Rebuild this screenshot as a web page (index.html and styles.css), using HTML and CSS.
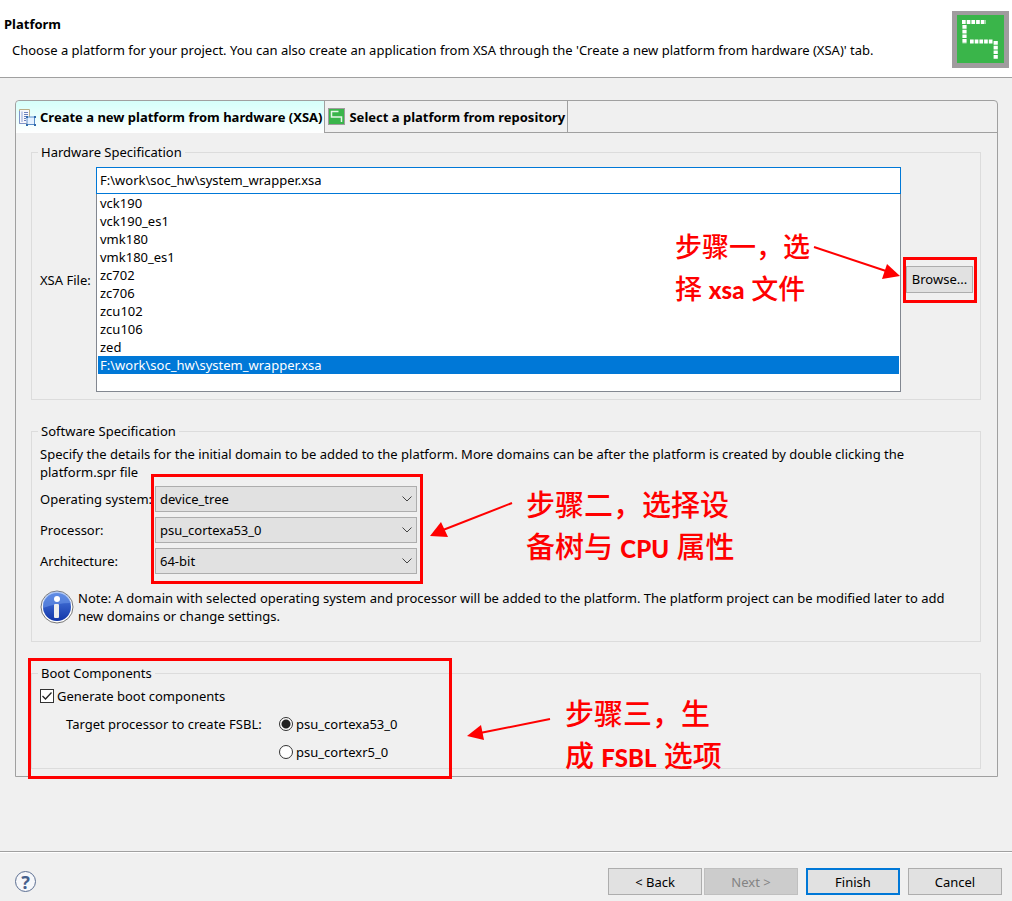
FILE: index.html
```html
<!DOCTYPE html>
<html lang="zh-CN">
<head>
    <meta charset="UTF-8">
    <meta name="viewport" content="width=device-width, initial-scale=1.0">
    <title>Platform</title>
    <link rel="stylesheet" href="styles.css">
</head>
<body>
    <header class="banner">
        <div class="banner-text">
            <h1>Platform</h1>
            <p>Choose a platform for your project. You can also create an application from XSA through the 'Create a new platform from hardware (XSA)' tab.</p>
        </div>
        <svg class="banner-logo" viewBox="0 0 57 57" aria-hidden="true">
            <rect width="57" height="57" fill="#a09c9e"/>
            <rect x="5" y="4" width="47" height="48" fill="#3ab54a"/>
            <g fill="none" stroke="#fff" stroke-width="4.200" stroke-dasharray="3.700 1">
                <path d="M10 11H34"/>
                <path d="M12.500 14V33"/>
                <path d="M18 30.500H41"/>
                <path d="M43.700 30V48.500"/>
            </g>
        </svg>
    </header>

    <main class="content">
        <div class="folder">
            <div class="tabs" role="tablist">
                <button type="button" class="tab active" role="tab" aria-selected="true">
                    <svg class="tab-icon" viewBox="0 0 17 17" aria-hidden="true">
                        <path d="M.5 .5H10.500V14.500H.5Z" fill="#f7f7fb" stroke="#b9ad86"/>
                        <path d="M.5 2V14.500H7" fill="none" stroke="#7f93c8"/>
                        <path d="M3 2.500V13" stroke="#8fa5d6"/>
                        <path d="M5 3.500H9M5 5.500H9M5 7.500H8M5 9.500H7M5 11.500H7" stroke="#6c82bd"/>
                        <path d="M8 8H15.500V15.500H8Z" fill="#e4f1ff" stroke="#5b8fca"/>
                        <path d="M7 7h2v2H7zM15 7h2v2h-2zM7 15h2v2H7zM15 15h2v2h-2z" fill="#2f69ab"/>
                    </svg>
                    Create a new platform from hardware (XSA)
                </button>
                <button type="button" class="tab" role="tab" aria-selected="false">
                    <svg class="tab-icon" viewBox="0 0 17 17" aria-hidden="true">
                        <rect width="17" height="17" fill="#a09c9e"/>
                        <rect x="1" y="1" width="15" height="15" fill="#3ab54a"/>
                        <path d="M10.500 3.500H3.500V9H13.500V14" fill="none" stroke="#e6f6e8" stroke-width="1.500"/>
                    </svg>
                    Select a platform from repository
                </button>
                <div class="tab-rest"></div>
            </div>

            <div class="panel">
                <fieldset class="group hardware">
                    <legend>Hardware Specification</legend>
                    <div class="xsa-row">
                        <label for="xsaFile">XSA File:</label>
                        <div class="xsa-picker">
                            <input type="text" id="xsaFile" class="xsa-input" value="F:\work\soc_hw\system_wrapper.xsa">
                            <select class="xsa-list" size="11" aria-label="XSA File">
                                <option>vck190</option>
                                <option>vck190_es1</option>
                                <option>vmk180</option>
                                <option>vmk180_es1</option>
                                <option>zc702</option>
                                <option>zc706</option>
                                <option>zcu102</option>
                                <option>zcu106</option>
                                <option>zed</option>
                                <option selected>F:\work\soc_hw\system_wrapper.xsa</option>
                            </select>
                            <div class="note note-one">
                                <p>步骤一，选<br>择 <b>xsa</b> 文件</p>
                                <svg class="arrow" width="88" height="36" viewBox="0 0 88 36" aria-hidden="true">
                                    <path d="M1 2L76 27" stroke="#f00" stroke-width="2"/>
                                    <path d="M87 31L69 34L74 19Z" fill="#f00"/>
                                </svg>
                            </div>
                        </div>
                        <div class="browse-frame">
                            <button type="button" class="btn">Browse...</button>
                        </div>
                    </div>
                </fieldset>

                <fieldset class="group software">
                    <legend>Software Specification</legend>
                    <p>Specify the details for the initial domain to be added to the platform. More domains can be after the platform is created by double clicking the platform.spr file</p>
                    <div class="domain">
                        <div class="domain-labels">
                            <label for="os">Operating system:</label>
                            <label for="processor">Processor:</label>
                            <label for="arch">Architecture:</label>
                        </div>
                        <div class="domain-fields">
                            <select id="os" class="combo"><option>device_tree</option></select>
                            <select id="processor" class="combo"><option>psu_cortexa53_0</option></select>
                            <select id="arch" class="combo"><option>64-bit</option></select>
                            <div class="domain-frame"></div>
                            <div class="note note-two">
                                <svg class="arrow" width="84" height="38" viewBox="0 0 84 38" aria-hidden="true">
                                    <path d="M83 2L14 29" stroke="#f00" stroke-width="2"/>
                                    <path d="M1 35L12 21L19 36Z" fill="#f00"/>
                                </svg>
                                <p>步骤二，选择设<br>备树与 <b>CPU</b> 属性</p>
                            </div>
                        </div>
                    </div>
                    <div class="info">
                        <svg class="info-icon" viewBox="0 0 34 34" aria-hidden="true">
                            <defs>
                                <linearGradient id="ball" x1="0" y1="0" x2="0" y2="1">
                                    <stop offset="0" stop-color="#4d7de0"/>
                                    <stop offset="1" stop-color="#1236a8"/>
                                </linearGradient>
                            </defs>
                            <circle cx="17" cy="17" r="16" fill="#fff" stroke="#777"/>
                            <circle cx="17" cy="17" r="14" fill="url(#ball)"/>
                            <path d="M3 18A14 14 0 0 1 31 13Q17 13 3 18Z" fill="#6f99ea" opacity=".55"/>
                            <circle cx="17" cy="9" r="3" fill="#fff"/>
                            <rect x="14" y="14" width="5" height="14" rx="1" fill="#eee"/>
                        </svg>
                        <p>Note: A domain with selected operating system and processor will be added to the platform. The platform project can be modified later to add new domains or change settings.</p>
                    </div>
                </fieldset>

                <fieldset class="group boot">
                    <legend>Boot Components</legend>
                    <label class="choice"><input type="checkbox" class="check" checked>Generate boot components</label>
                    <div class="fsbl">
                        <span id="fsblLabel">Target processor to create FSBL:</span>
                        <div class="fsbl-options" role="radiogroup" aria-labelledby="fsblLabel">
                            <label class="choice"><input type="radio" class="radio" name="fsbl" checked>psu_cortexa53_0</label>
                            <label class="choice"><input type="radio" class="radio" name="fsbl">psu_cortexr5_0</label>
                        </div>
                    </div>
                    <div class="boot-frame"></div>
                    <div class="note note-three">
                        <svg class="arrow" width="86" height="26" viewBox="0 0 86 26" aria-hidden="true">
                            <path d="M84 2L14 16" stroke="#f00" stroke-width="2"/>
                            <path d="M1 19L15 8L18 23Z" fill="#f00"/>
                        </svg>
                        <p>步骤三，生<br>成 <b>FSBL</b> 选项</p>
                    </div>
                </fieldset>
            </div>
        </div>
    </main>

    <footer class="footer">
        <button type="button" class="help" aria-label="Help">?</button>
        <div class="footer-buttons">
            <button type="button" class="btn">&lt; Back</button>
            <button type="button" class="btn" disabled>Next &gt;</button>
            <button type="button" class="btn primary">Finish</button>
            <button type="button" class="btn">Cancel</button>
        </div>
    </footer>
</body>
</html>
```
FILE: styles.css
```css
* {
    box-sizing: border-box;
    margin: 0;
    padding: 0;
}

body {
    min-height: 100vh;
    display: flex;
    flex-direction: column;
    background: #f0f0f0;
    color: #000;
    font-family: "Noto Sans", "Noto Sans CJK SC", sans-serif;
    font-size: 13px;
    line-height: 18px;
}

button,
input,
select {
    font: inherit;
    color: inherit;
}

/* banner */
.banner {
    display: flex;
    justify-content: space-between;
    align-items: flex-start;
    height: 78px;
    padding: 11px 3px 0 4px;
    background: #fff;
    border-bottom: 1px solid #a0a0a0;
}

.banner h1 {
    margin-top: 4px;
    font-size: 13px;
    line-height: 18px;
}

.banner p {
    margin: 8px 0 0 8px;
}

.banner-logo {
    flex: none;
    width: 57px;
    height: 57px;
}

.content {
    flex: 1;
    padding: 22px 14px 22px 15px;
}

/* tab folder */
.folder {
    border: 1px solid #a0a0a0;
    border-radius: 4px 4px 0 0;
}

.tabs {
    display: flex;
    height: 32px;
}

.tab {
    display: flex;
    align-items: center;
    gap: 4px;
    padding: 0 2px 0 3px;
    border: 0;
    border-right: 1px solid #a0a0a0;
    border-bottom: 1px solid #a0a0a0;
    background: #f0f0f0;
    font-weight: bold;
    white-space: nowrap;
}

.tab.active {
    border-bottom: 0;
    border-radius: 4px 0 0 0;
    background: linear-gradient(#d5fffa, #fff);
}

.tab-icon {
    width: 17px;
    height: 17px;
}

.tab-rest {
    flex: 1;
    border-bottom: 1px solid #a0a0a0;
}

.panel {
    display: flex;
    flex-direction: column;
    gap: 22px;
    padding: 10px 16px 7px 15px;
}

.group {
    position: relative;
    min-width: 0;
    padding: 5px 8px;
    border: 1px solid #dcdcdc;
}

.group legend {
    margin-left: -2px;
    padding: 0 3px;
}

/* hardware */
.hardware {
    padding: 6px 3px 7px 8px;
}

.xsa-row {
    display: flex;
    align-items: center;
    gap: 5px;
}

.xsa-row > label {
    width: 51px;
    white-space: nowrap;
}

.xsa-picker {
    position: relative;
    flex: 1;
    display: flex;
    flex-direction: column;
}

.xsa-input {
    height: 27px;
    padding: 0 3px 2px;
    border: 1px solid #0078d7;
    outline: none;
    background: #fff;
}

.xsa-list {
    height: 198px;
    padding: 0 1px;
    border: 1px solid #828790;
    border-top: 0;
    border-radius: 0;
    outline: none;
    overflow: hidden;
    background: #fff;
}

.xsa-list option {
    min-height: 18px;
    padding: 0 2px;
    line-height: 18px;
}

.xsa-list option:checked {
    background: #0078d7 linear-gradient(#0078d7, #0078d7);
    color: #fff;
}

.btn {
    height: 27px;
    border: 1px solid #adadad;
    background: #e1e1e1;
    text-align: center;
}

.browse-frame {
    width: 74px;
    padding: 6px 1px 7px 0;
    border: 3px solid #f00;
    margin-left: -3px;
}

.browse-frame .btn {
    width: 100%;
}

/* software */
.software {
    padding-bottom: 16px;
}

.domain {
    display: flex;
    gap: 5px;
    margin-top: 5px;
}

.domain-labels,
.domain-fields {
    display: flex;
    flex-direction: column;
    gap: 5px;
}

.domain-labels {
    width: 110px;
    white-space: nowrap;
}

.domain-labels label {
    line-height: 26px;
}

.domain-fields {
    position: relative;
    width: 262px;
}

.domain-frame {
    position: absolute;
    top: -12px;
    right: -6px;
    bottom: -10px;
    left: -4px;
    border: 3px solid #f00;
    pointer-events: none;
}

.combo {
    appearance: none;
    height: 26px;
    padding: 0 24px 0 4px;
    border: 1px solid #adadad;
    border-radius: 0;
    background: #e1e1e1 url("data:image/svg+xml,%3Csvg xmlns='http://www.w3.org/2000/svg' width='10' height='6'%3E%3Cpath d='M0.500 0.500L5 5L9.500 0.500' fill='none' stroke='%23444'/%3E%3C/svg%3E") no-repeat right 4px center;
}

.info {
    display: flex;
    gap: 4px;
    margin-top: 15px;
}

.info-icon {
    flex: none;
    width: 34px;
    height: 36px;
}

/* boot */
.boot {
    padding-bottom: 7px;
}

.choice {
    display: flex;
    align-items: center;
    gap: 3px;
    white-space: nowrap;
}

.check,
.radio {
    appearance: none;
    width: 14px;
    height: 14px;
    border: 1px solid #333;
    background: #fff;
}

.check:checked {
    background: #fff url("data:image/svg+xml,%3Csvg xmlns='http://www.w3.org/2000/svg' width='12' height='12'%3E%3Cpath d='M1.500 6L4.500 9L10.500 2.500' fill='none' stroke='%23222' stroke-width='1.300'/%3E%3C/svg%3E") center no-repeat;
}

.radio {
    border-radius: 50%;
}

.radio:checked {
    background: radial-gradient(circle, #222 4px, #fff 5px);
}

.fsbl {
    display: flex;
    gap: 14px;
    margin: 10px 0 0 26px;
}

.fsbl > span {
    width: 199px;
    white-space: nowrap;
}

.fsbl-options {
    display: flex;
    flex-direction: column;
    gap: 10px;
}

.boot-frame {
    position: absolute;
    top: -24px;
    bottom: -11px;
    left: -4px;
    width: 424px;
    border: 3px solid #f00;
    pointer-events: none;
}

/* red step notes drawn over the dialog */
.note {
    position: absolute;
    display: flex;
    color: #f00;
    font-family: Lato, "Noto Sans CJK SC", sans-serif;
    font-size: 29px;
    font-weight: 500;
    line-height: 42px;
    white-space: nowrap;
    pointer-events: none;
}

.note b {
    font-size: 24px;
    font-weight: 900;
}

.note .arrow {
    flex: none;
}

.note-one {
    top: 59px;
    right: 0;
    gap: 3px;
    font-size: 27px;
}

.note-one .arrow {
    margin-top: 19px;
}

.note-two {
    top: -2px;
    left: 274px;
    gap: 13px;
}

.note-two .arrow {
    margin-top: 17px;
}

.note-three {
    top: 11px;
    left: 434px;
    gap: 13px;
}

.note-three .arrow {
    margin-top: 24px;
}

/* footer */
.footer {
    display: flex;
    justify-content: space-between;
    align-items: center;
    padding: 16px 10px 6px 15px;
    border-top: 1px solid #a0a0a0;
    box-shadow: inset 0 1px #fff;
}

.help {
    width: 21px;
    height: 21px;
    border: 1px solid #5c6f92;
    border-radius: 50%;
    background: #f6f7fa;
    color: #46608c;
    font-size: 18px;
    font-weight: bold;
    line-height: 18px;
}

.footer-buttons {
    display: flex;
}

.footer-buttons .btn {
    width: 94px;
    margin-left: 2px;
}

.footer-buttons .btn:disabled {
    border-color: #bfbfbf;
    background: #ccc;
    color: #838383;
}

.footer-buttons .primary {
    border: 2px solid #0078d7;
}

.footer-buttons .btn:nth-child(n+3) {
    margin-left: 8px;
}
```
